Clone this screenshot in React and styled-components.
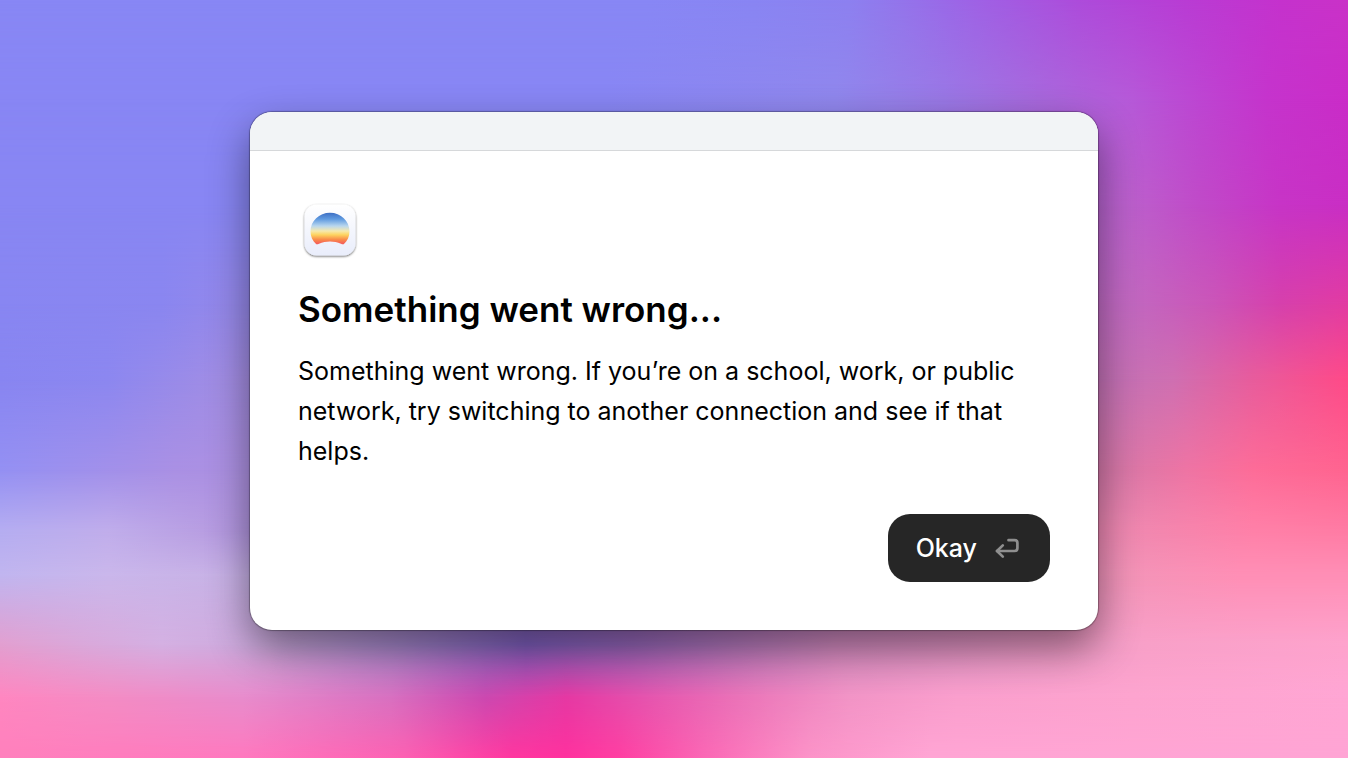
import React from "react";
import styled, { createGlobalStyle } from "styled-components";

// Each band is a horizontal blend that fades in between two heights of the page
const bands = [
  { from: 0, to: 0, colors: "#8887f5 0%, #8887f5 48%, #8985f3 56%, #8d80f0 63%, #9474eb 67%, #9c66e7 71%, #ad4cdb 80%, #b93cd4 88%, #c532cd 95%, #ca32c8 100%" },
  { from: 0, to: 13, colors: "#8886f4 0%, #8886f4 45%, #9087ed 62%, #9a78e6 70%, #a868dd 77%, #b658d8 84%, #bd45d2 89%, #c534cc 94%, #ca2cc8 100%" },
  { from: 13, to: 27, colors: "#8886f3 0%, #8886f3 50%, #a07ae0 70%, #bc5fcc 84%, #c04ac8 89%, #c734c6 95%, #c92ec4 100%" },
  { from: 27, to: 40, colors: "#8886f2 0%, #8a86f0 12%, #9488ea 17%, #9a88e8 30%, #b072d0 70%, #c268c0 84%, #cb55b8 90%, #d640ac 95%, #e23ba2 100%" },
  { from: 40, to: 50, colors: "#8885f1 0%, #8c87f0 8%, #a08de5 16%, #a68cdf 20%, #b080d0 60%, #c571b5 83%, #cf6fb1 87%, #e85c9c 93%, #ff4a88 100%" },
  { from: 50, to: 62, colors: "#9490f3 0%, #a090eb 7%, #aa90e4 13%, #ad90e0 20%, #b080d0 60%, #d878a8 83%, #ee74a4 88%, #fd6c98 93%, #ff6490 100%" },
  { from: 62, to: 70, colors: "#b5adf1 0%, #c0adeb 8%, #b89ee2 15%, #ad90dd 20%, #a878cc 50%, #f088b0 84%, #ff80a8 93%, #ff7ba4 100%" },
  { from: 70, to: 76, colors: "#c1b5ef 0%, #cab7eb 8%, #c8b2e6 16%, #c0a8e0 21%, #9a72cc 42%, #c080c8 62%, #f494b8 84%, #ff8fb6 92%, #ff8fb6 100%" },
  { from: 76, to: 85, colors: "#e29fd0 0%, #daa8da 6%, #d4b0e2 12%, #cba8dc 20%, #a486cc 30%, #8060c0 39%, #9868bc 47%, #d58cc2 62%, #f8a0c8 85%, #fea3cd 100%" },
  { from: 85, to: 92, colors: "#ff86c0 0%, #f48cc4 8%, #e88ccc 18%, #d870c0 29%, #cc48b0 36%, #e638a3 42%, #e654ae 48%, #ec78ba 56%, #f294c6 63%, #fa9fcd 71%, #fda4cf 84%, #ffa6d4 100%" },
  { from: 92, to: 100, colors: "#ff80bc 0%, #ff78be 18%, #fd60b2 30%, #ff369f 38%, #ff319e 42%, #ff3fa2 46%, #fb66b4 52%, #fc93c8 60%, #ffa5d4 69%, #ffa4d4 100%" },
];

function AppLogo() {
  return (
    <svg width="64" height="64" viewBox="0 0 64 64" role="img" aria-label="App icon">
      <defs>
        <linearGradient id="tile" x1="0" y1="0" x2="0" y2="1">
          <stop offset="0" stopColor="#ffffff" />
          <stop offset="1" stopColor="#e9edfb" />
        </linearGradient>
        <linearGradient id="sky" x1="0" y1="0" x2="0" y2="1">
          <stop offset="0" stopColor="#3d6fc4" />
          <stop offset="0.2" stopColor="#5f9ae0" />
          <stop offset="0.42" stopColor="#b9d7ee" />
          <stop offset="0.58" stopColor="#f6e9ad" />
          <stop offset="0.7" stopColor="#fdd35f" />
          <stop offset="0.85" stopColor="#f98b4a" />
          <stop offset="1" stopColor="#f4575c" />
        </linearGradient>
        <filter id="drop" x="-20%" y="-20%" width="140%" height="140%">
          <feDropShadow dx="0" dy="1" stdDeviation="1.200" floodOpacity="0.6" />
        </filter>
      </defs>
      <rect x="6.500" y="5.500" width="51" height="51" rx="12" fill="url(#tile)" filter="url(#drop)" />
      <path
        d="M18.300 45.200C14.500 41.700 12.500 37.500 12.500 32.500C12.500 22 21.200 13.800 32 13.800S51.500 22 51.500 32.500C51.500 37.500 49.500 41.700 45.700 45.200C44.800 45.400 44 45.200 43 44.700C36 41.600 28 41.600 21 44.700C20 45.200 19.200 45.400 18.300 45.200Z"
        fill="url(#sky)"
      />
    </svg>
  );
}

function ReturnIcon() {
  return (
    <svg
      width="24"
      height="24"
      viewBox="0 0 24 24"
      fill="none"
      stroke="#8f8f8f"
      strokeWidth="2.700"
      strokeLinecap="round"
      strokeLinejoin="round"
      aria-hidden="true"
    >
      <path d="M13.500 4.200H19.500Q22.400 4.200 22.400 7V12Q22.400 15 19.500 15H2" />
      <path d="M7.800 9.400L2 15L7.800 20.600" />
    </svg>
  );
}

function App() {
  return (
    <Desktop>
      <GlobalStyle />
      {bands.map((band) => (
        <Band key={band.to} $from={band.from} $to={band.to} $colors={band.colors} />
      ))}
      <Screen>
        <Dialog role="alertdialog" aria-labelledby="title" aria-describedby="message">
          <TitleBar />
          <Content>
            <AppLogo />
            <Title id="title">Something went wrong...</Title>
            <Message id="message">
              Something went wrong. If you’re on a school, work, or public network, try
              switching to another connection and see if that helps.
            </Message>
            <Actions>
              <OkayButton type="button">
                Okay
                <ReturnIcon />
              </OkayButton>
            </Actions>
          </Content>
        </Dialog>
      </Screen>
    </Desktop>
  );
}

export default App;


// Styled Components

const GlobalStyle = createGlobalStyle`
  * {
    box-sizing: border-box;
  }

  body {
    margin: 0;
    font-family: Inter, "Liberation Sans", sans-serif;
  }
`;

const Desktop = styled.div`
  display: grid;
  min-height: 100vh;
`;

const Band = styled.div`
  grid-area: 1 / 1;
  background: linear-gradient(to right, ${({ $colors }) => $colors});
  mask-image: linear-gradient(
    to bottom,
    ${({ $from, $to }) => ($to === 0 ? "#000, #000" : `transparent ${$from}%, #000 ${$to}%`)}
  );
`;

const Screen = styled.main`
  grid-area: 1 / 1;
  z-index: 1;
  display: flex;
  align-items: center;
  justify-content: center;
  padding: 24px 24px 40px;
`;

const Dialog = styled.section`
  width: 100%;
  max-width: 848px;
  border-radius: 22px;
  background-color: #fff;
  box-shadow: 0 0 1px 1px rgba(0, 0, 0, 0.3), 0 18px 42px rgba(0, 0, 0, 0.46);
  overflow: hidden;
`;

const TitleBar = styled.header`
  height: 39px;
  background-color: #f2f4f6;
  border-bottom: 1px solid #d6d8da;
`;

const Content = styled.div`
  display: flex;
  flex-direction: column;
  padding: 48px;
`;

const Title = styled.h1`
  margin: 24px 0 20px;
  font-size: 35px;
  font-weight: 600;
  line-height: 44px;
  color: #000;
`;

const Message = styled.p`
  margin: 0 0 43px;
  font-size: 25px;
  line-height: 40px;
  color: #000;
`;

const Actions = styled.div`
  display: flex;
  justify-content: flex-end;
`;

const OkayButton = styled.button`
  display: flex;
  align-items: center;
  gap: 18px;
  height: 68px;
  padding: 0 31px 0 28px;
  border: none;
  border-radius: 22px;
  background-color: #262626;
  color: #fff;
  font-family: inherit;
  font-size: 25px;
  font-weight: 500;
  cursor: pointer;

  &:hover {
    background-color: #333;
  }
`;
